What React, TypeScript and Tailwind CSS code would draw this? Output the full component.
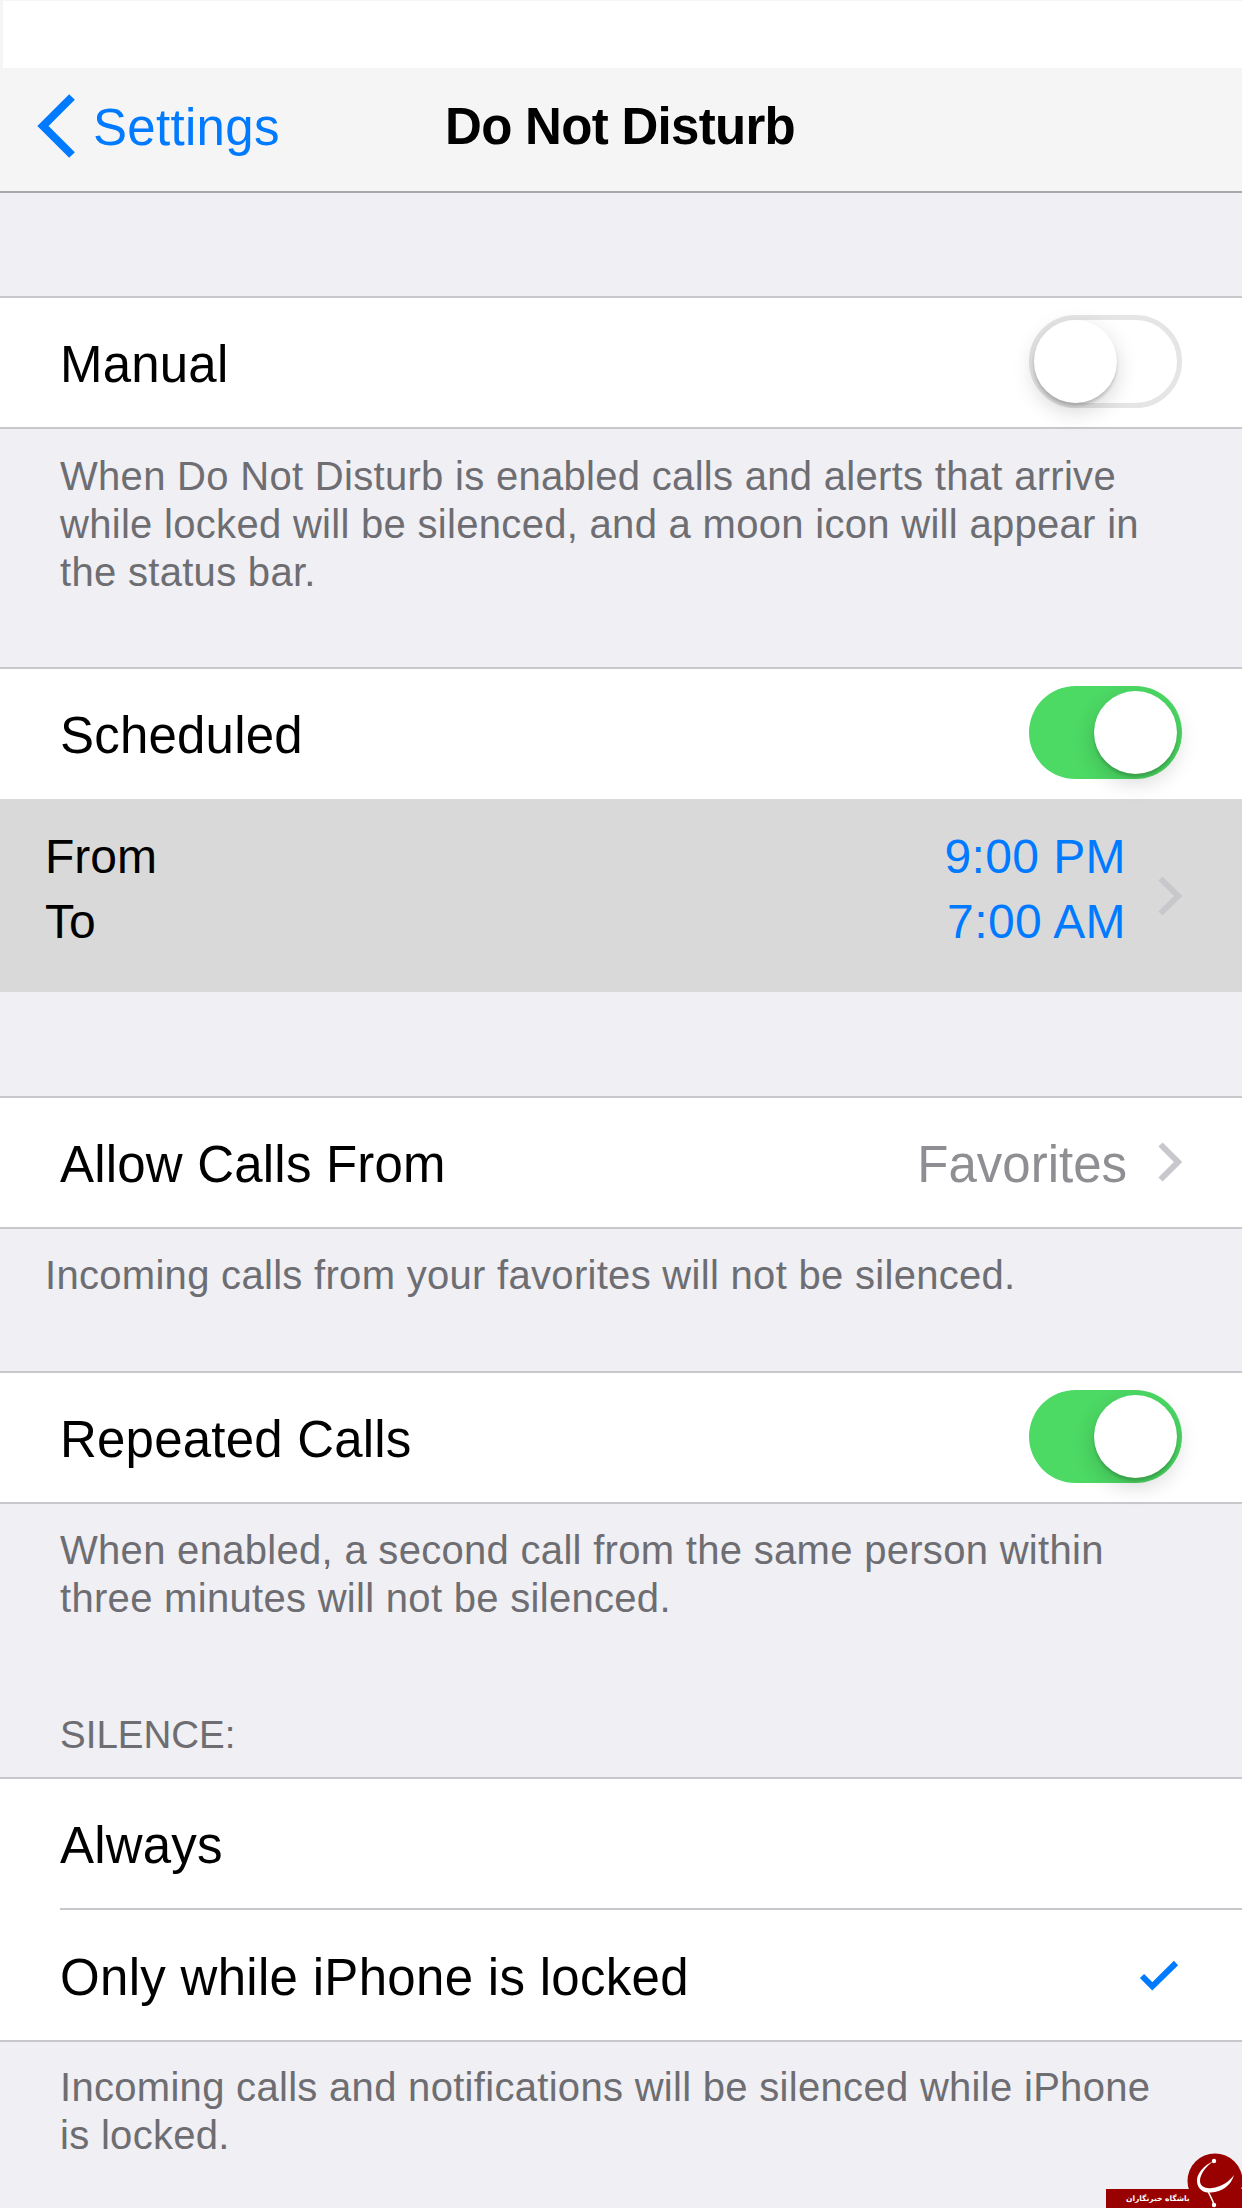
const FONT = "font-['Liberation_Sans',Arial,sans-serif]";

function Toggle({ on, className = "mb-[2px]" }: { on: boolean; className?: string }) {
  return (
    <div
      className={`relative w-[153px] h-[93px] rounded-full ${className} ${
        on ? "bg-[#4cd964]" : "bg-white border-[5px] border-[#e5e5e5]"
      }`}
    >
      <div
        className={`absolute w-[83px] h-[83px] rounded-full bg-white shadow-[0_8px_22px_rgba(0,0,0,0.17),0_3px_3px_rgba(0,0,0,0.16)] ${
          on ? "left-[65px] top-[5px]" : "left-0 top-0"
        }`}
      />
    </div>
  );
}

function Chevron() {
  return (
    <svg width="24" height="40" viewBox="0 0 24 40" className="block">
      <path d="M2.5 2.5 L20 20 L2.5 37.5" fill="none" stroke="#c7c7cc" strokeWidth="6" />
    </svg>
  );
}

function Row({ label, children }: { label: string; children?: React.ReactNode }) {
  return (
    <div className="h-[131px] bg-white px-[60px] flex items-center justify-between text-[51px] tracking-[0.2px] text-black border-b-[2px] border-[#c8c7cc]">
      <span className="pt-[6px]">{label}</span>
      {children}
    </div>
  );
}

function Note({ className, children }: { className: string; children: React.ReactNode }) {
  return (
    <div className={`text-[#6d6d72] text-[40px] tracking-[0.3px] leading-[48px] ${className}`}>{children}</div>
  );
}

export default function App() {
  return (
    <div className={`${FONT} relative w-[1242px] h-[2208px] overflow-hidden bg-[#efeff4]`}>
      <div className="h-[68px] bg-white border-l-[3px] border-t border-[#f5f5f5]" />
      <div className="h-[125px] bg-[#f5f5f5] border-b-[2px] border-[#a9a9ad] relative flex items-center justify-center pb-[4px] pr-[2px]">
        <div className="absolute left-[37px] top-[18px] flex items-center gap-[16px]">
          <svg width="40" height="64" viewBox="0 0 40 64" className="block">
            <path d="M35 3 L6 32 L35 61" fill="none" stroke="#007aff" strokeWidth="8" />
          </svg>
          <span className="text-[51px] tracking-[0.3px] text-[#007aff] mt-[4px]">Settings</span>
        </div>
        <span className="text-[51px] font-bold text-black tracking-[-0.7px]">Do Not Disturb</span>
      </div>

      <div className="h-[105px] border-b-[2px] border-[#c8c7cc]" />
      <Row label="Manual">
        <Toggle on={false} />
      </Row>
      <Note className="h-[240px] pt-[23px] pl-[60px] border-b-[2px] border-[#c8c7cc]">
        When Do Not Disturb is enabled calls and alerts that arrive
        <br />
        while locked will be silenced, and a moon icon will appear in
        <br />
        the status bar.
      </Note>

      <div className="h-[130px] bg-white px-[60px] flex items-center justify-between text-[51px] tracking-[0.2px] text-black">
        <span className="pt-[5px]">Scheduled</span>
        <Toggle on className="mb-[3px]" />
      </div>
      <div className="h-[193px] bg-[#d9d9d9] pl-[45px] pr-[60px] flex items-center justify-between text-[48px] leading-[65px]">
        <div className="text-black mb-[14px]">
          <div>From</div>
          <div>To</div>
        </div>
        <div className="flex items-center gap-[32px]">
          <div className="text-[#007aff] text-right tracking-[0.4px] mb-[14px]">
            <div>9:00 PM</div>
            <div>7:00 AM</div>
          </div>
          <Chevron />
        </div>
      </div>

      <div className="h-[106px] border-b-[2px] border-[#c8c7cc]" />
      <Row label="Allow Calls From">
        <div className="flex items-center gap-[31px] text-[#8e8e93] tracking-normal">
          <span className="pt-[6px]">Favorites</span>
          <span className="mb-[2px]">
            <Chevron />
          </span>
        </div>
      </Row>
      <Note className="h-[144px] pt-[22px] pl-[45px] border-b-[2px] border-[#c8c7cc]">
        Incoming calls from your favorites will not be silenced.
      </Note>

      <Row label="Repeated Calls">
        <Toggle on />
      </Row>
      <Note className="h-[275px] pt-[22px] pl-[60px] border-b-[2px] border-[#c8c7cc]">
        When enabled, a second call from the same person within
        <br />
        three minutes will not be silenced.
        <div className="mt-[89px] text-[38.5px] tracking-normal leading-[48px]">SILENCE:</div>
      </Note>

      <div className="bg-white">
        <div className="h-[131px] pl-[60px] text-[51px] tracking-[0.2px] text-black">
          <div className="h-full flex items-center border-b-[2px] border-[#c8c7cc]">
            <span className="pt-[6px]">Always</span>
          </div>
        </div>
        <div className="h-[132px] px-[60px] flex items-center justify-between text-[51px] tracking-[0.3px] text-black border-b-[2px] border-[#c8c7cc]">
          <span className="pt-[6px]">Only while iPhone is locked</span>
          <svg width="42" height="32" viewBox="0 0 42 32" className="block mr-[1px] mt-[2px]">
            <path d="M3 16 L13.3 26.3 L37 3" fill="none" stroke="#007aff" strokeWidth="6" />
          </svg>
        </div>
      </div>
      <Note className="pt-[21px] pl-[60px]">
        Incoming calls and notifications will be silenced while iPhone
        <br />
        is locked.
      </Note>

      <div className="absolute left-[1106px] bottom-0 w-[136px] h-[19px] bg-[#990000] text-white text-[7.5px] font-bold leading-[19px] pl-[20px] font-['DejaVu_Sans',sans-serif]">
        باشگاه خبرنگاران
      </div>
      <svg width="56" height="56" viewBox="0 0 56 56" className="absolute left-[1187px] top-[2153px]">
        <circle cx="28" cy="28" r="27.5" fill="#990000" />
        <path
          d="M27 8 C17 12 9 21 10 29 C11 37 17 40 24 39.5 C35 38.5 44 33 47 22 C42 29 34 34 25 35 C18 36 13 33 13 28 C13 21 19 13 27 8 Z"
          fill="#fff"
        />
        <path d="M21 38 C23 43 26 47 27 52" fill="none" stroke="#fff" strokeWidth="1.5" />
        <circle cx="27" cy="8" r="2.2" fill="#fff" />
        <circle cx="27" cy="52" r="2.2" fill="#fff" />
      </svg>
    </div>
  );
}
